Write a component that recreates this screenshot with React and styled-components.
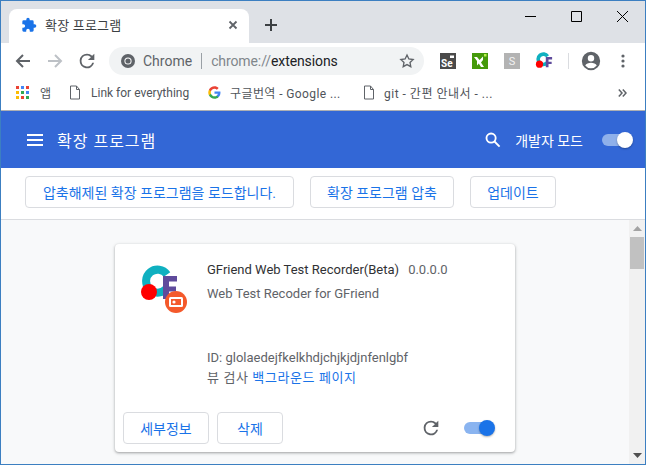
import React from 'react';
import styled, { createGlobalStyle } from 'styled-components';

const Global = createGlobalStyle`
  html, body { margin: 0; padding: 0; background: #fff; overflow: hidden; }
  * { box-sizing: border-box; }
`;

const Window = styled.div`
  width: 646px;
  height: 465px;
  border: 1px solid #3c7fc1;
  display: flex;
  flex-direction: column;
  overflow: hidden;
  font-family: Roboto, "Noto Sans CJK KR", sans-serif;
  background: #fff;
`;

const TabStrip = styled.div`
  height: 42px;
  flex: none;
  background: #dee1e6;
  display: flex;
  align-items: flex-end;
  padding-left: 8px;
`;

const Tab = styled.div`
  width: 240px;
  height: 34px;
  background: #fff;
  border-radius: 8px 8px 0 0;
  display: flex;
  align-items: center;
  padding: 0 11px 3px 12px;
  font-size: 13px;
  color: #3c4043;
  gap: 8px;
`;

const TabTitle = styled.span`
  flex: 1;
  letter-spacing: 0.2px;
`;

const NewTab = styled.div`
  width: 44px;
  height: 34px;
  display: flex;
  align-items: center;
  justify-content: center;
  padding-bottom: 3px;
`;

const WindowControls = styled.div`
  margin-left: auto;
  align-self: flex-start;
  display: flex;
  height: 30px;
  align-items: center;
`;

const WinBtn = styled.div`
  width: 46px;
  height: 30px;
  display: flex;
  align-items: center;
  justify-content: center;
`;

const Toolbar = styled.div`
  height: 34px;
  flex: none;
  display: flex;
  align-items: center;
  padding: 2px 0 0 6px;
  background: #fff;
`;

const NavBtn = styled.div`
  width: 32px;
  height: 28px;
  display: flex;
  align-items: center;
  justify-content: center;
`;

const Omnibox = styled.div`
  width: 315px;
  height: 28px;
  margin-left: 6px;
  background: #f1f3f4;
  border-radius: 14px;
  display: flex;
  align-items: center;
  padding: 0 9px 0 12px;
  font-size: 14px;
  color: #5f6368;
`;

const Scheme = styled.span`
  margin-left: 8px;
`;

const Divider = styled.span`
  width: 1px;
  height: 16px;
  background: #9aa0a6;
  margin: 0 9px;
`;

const Url = styled.span`
  flex: 1;
  color: #80868b;
  letter-spacing: -0.1px;
  b { font-weight: 400; color: #202124; }
`;

const ExtSlot = styled.div`
  width: 32px;
  height: 28px;
  display: flex;
  align-items: center;
  justify-content: center;
`;

const Extensions = styled.div`
  display: flex;
  align-items: center;
  margin-left: 8px;
`;

const ExtIcon = styled.div`
  width: 16px;
  height: 16px;
  background: ${p => p.$bg};
`;

const Sep = styled.div`
  width: 1px;
  height: 16px;
  background: #dadce0;
  margin: 0 6px 0 8px;
`;

const Bookmarks = styled.div`
  height: 29px;
  flex: none;
  display: flex;
  align-items: center;
  padding: 2px 0 0 15px;
  font-size: 12px;
  color: #50545a;
`;

const Bookmark = styled.div`
  display: flex;
  align-items: center;
  gap: ${p => p.$gap}px;
  width: ${p => p.$w}px;
  flex: none;
  white-space: nowrap;
  overflow: hidden;
  letter-spacing: ${p => p.$track || 0}px;
`;

const More = styled.div`
  margin-left: 92px;
  display: flex;
`;

const ChromeLine = styled.div`
  height: 5px;
  flex: none;
  border-bottom: 1px solid #aeb0b3;
  background: #fff;
`;

const Header = styled.header`
  height: 57px;
  flex: none;
  background: #3367d6;
  display: flex;
  align-items: center;
  padding: 0 13px 0 26px;
  color: #fff;
`;

const Title = styled.h1`
  margin: 0 0 0 14px;
  font-size: 16px;
  font-weight: 400;
  letter-spacing: 1px;
`;

const HeaderRight = styled.div`
  margin-left: auto;
  display: flex;
  align-items: center;
  font-size: 14px;
`;

const DevLabel = styled.span`
  margin: 0 19px 0 14px;
`;

const Track = styled.div`
  position: relative;
  width: 30px;
  height: 12px;
  border-radius: 6px;
  background: ${p => p.$bg};
`;

const Thumb = styled.div`
  position: absolute;
  right: -1px;
  top: -2px;
  width: 16px;
  height: 16px;
  border-radius: 50%;
  background: ${p => p.$bg};
  box-shadow: 0 1px 2px rgba(0, 0, 0, 0.3);
`;

const ActionBar = styled.div`
  height: 52px;
  flex: none;
  display: flex;
  align-items: flex-start;
  gap: 16px;
  padding: 8px 0 0 24px;
  background: #fff;
  border-bottom: 1px solid #dadce0;
`;

const Button = styled.button`
  height: 32px;
  width: ${p => p.$w}px;
  border: 1px solid #dadce0;
  border-radius: 4px;
  background: #fff;
  color: #1a73e8;
  font: 400 14px Roboto, "Noto Sans CJK KR", sans-serif;
  padding: 0;
`;

const Body = styled.div`
  flex: 1;
  display: flex;
  background: #f8f9fa;
  min-height: 0;
`;

const Content = styled.div`
  flex: 1;
  padding: 24px 0 0 114px;
  overflow: hidden;
`;

const Card = styled.article`
  width: 400px;
  height: 208px;
  background: #fff;
  border-radius: 4px;
  box-shadow: 0 1px 2px rgba(60, 64, 67, 0.3), 0 1px 3px 1px rgba(60, 64, 67, 0.15);
  display: flex;
  flex-direction: column;
`;

const CardMain = styled.div`
  flex: 1;
  display: flex;
  padding: 19px 20px 0 24px;
`;

const Logo = styled.svg`
  width: 52px;
  height: 52px;
  flex: none;
  margin-top: 2px;
`;

const Info = styled.div`
  margin-left: 16px;
  display: flex;
  flex-direction: column;
  font-size: 13px;
  color: #5f6368;
`;

const NameRow = styled.div`
  display: flex;
  gap: 9px;
  height: 14px;
  line-height: 14px;
  color: #303134;
  margin-bottom: 7px;
  span + span { color: #5f6368; }
`;

const InfoLine = styled.div`
  line-height: 20px;
  margin-top: ${p => p.$top || 0}px;
`;

const InspectLine = styled(InfoLine)`
  letter-spacing: 0.6px;
  a { color: #1a73e8; text-decoration: none; }
`;

const CardFoot = styled.div`
  display: flex;
  align-items: center;
  gap: 8px;
  padding: 0 21px 8px 8px;
`;

const FootRight = styled.div`
  margin-left: auto;
  display: flex;
  align-items: center;
  gap: 22px;
`;

const ScrollBar = styled.div`
  width: 16px;
  flex: none;
  background: #f1f1f1;
  display: flex;
  flex-direction: column;
  align-items: center;
`;

const ScrollThumb = styled.div`
  width: 14px;
  height: 32px;
  background: #c1c1c1;
`;

const ScrollRest = styled.div`
  flex: 1;
`;

const Arrow = styled.div`
  width: 16px;
  height: 17px;
  display: flex;
  align-items: center;
  justify-content: center;
`;

const PuzzlePath = "M20.5 11H19V7a2 2 0 0 0-2-2h-4V3.5a2.5 2.5 0 0 0-5 0V5H4a2 2 0 0 0-2 2v3.8h1.5a2.7 2.7 0 0 1 0 5.4H2V20a2 2 0 0 0 2 2h3.8v-1.5a2.7 2.7 0 0 1 5.4 0V22H17a2 2 0 0 0 2-2v-4h1.5a2.5 2.5 0 0 0 0-5z";

const Reload = () => (
  <svg width="22" height="22" viewBox="0 0 24 24" fill="#5f6368">
    <path d="M17.65 6.35A7.96 7.96 0 0 0 12 4a8 8 0 1 0 7.73 10h-2.08A6 6 0 1 1 12 6c1.66 0 3.14.69 4.22 1.78L13 11h7V4l-2.35 2.35z" />
  </svg>
);

const PageIcon = () => (
  <svg width="12" height="15" viewBox="0 0 12 15" fill="none" stroke="#5f6368">
    <path d="M1.500 1h6l3 3.500v9.500h-9zM7.500 1v3.500h3" />
  </svg>
);

const GoogleG = () => (
  <svg width="13" height="13" viewBox="0 0 48 48">
    <path fill="#4285f4" d="M46 24.5c0-1.600-.1-3.100-.4-4.500H24v8.500h12.400c-.5 2.800-2.100 5.200-4.500 6.800v5.600h7.300C43.500 37 46 31.300 46 24.500z" />
    <path fill="#34a853" d="M24 47c6.200 0 11.300-2 15.200-5.600l-7.300-5.600c-2 1.400-4.700 2.200-7.900 2.200-6 0-11.100-4-12.900-9.500H3.500v5.800C7.300 41.800 15 47 24 47z" />
    <path fill="#fbbc05" d="M11.100 28.500a13.800 13.800 0 0 1 0-9V13.700H3.500a23 23 0 0 0 0 20.600z" />
    <path fill="#ea4335" d="M24 10.100c3.400 0 6.400 1.200 8.800 3.400l6.500-6.500C35.300 3.300 30.200 1 24 1 15 1 7.300 6.200 3.500 13.700l7.600 5.800C12.900 14.100 18 10.100 24 10.100z" />
  </svg>
);

const AppsGrid = () => {
  const colors = ['#ea4335', '#4285f4', '#ea4335', '#fbbc05', '#34a853', '#4285f4', '#fbbc05', '#ea4335', '#34a853'];
  return (
    <svg width="13" height="13" viewBox="0 0 13 13">
      {colors.map((c, i) => (
        <rect key={i} x={(i % 3) * 5} y={Math.floor(i / 3) * 5} width="3" height="3" fill={c} />
      ))}
    </svg>
  );
};

const GfMark = () => (
  <>
    <path d="M28 9.500A11.500 11.500 0 1 0 27 24" fill="none" stroke="#0fb0c0" strokeWidth="8" />
    <path d="M24 11h14v5.500h-8v5h7v5h-7V34h-6z" fill="#5f4b9c" />
    <circle cx="10" cy="27" r="8" fill="#f00" />
  </>
);

export default function App() {
  return (
    <>
      <Global />
      <Window>
        <TabStrip>
          <Tab>
            <svg width="16" height="16" viewBox="0 0 24 24" fill="#1a73e8"><path d={PuzzlePath} /></svg>
            <TabTitle>확장 프로그램</TabTitle>
            <svg width="10" height="10" viewBox="0 0 10 10" stroke="#5f6368" strokeWidth="1.8"><path d="M1.500 1.500l7 7M8.500 1.500l-7 7" /></svg>
          </Tab>
          <NewTab>
            <svg width="12" height="12" viewBox="0 0 12 12" stroke="#3c4043" strokeWidth="2"><path d="M6 0v12M0 6h12" /></svg>
          </NewTab>
          <WindowControls>
            <WinBtn><svg width="11" height="11" viewBox="0 0 11 11" stroke="#000"><path d="M0 5.500h11" /></svg></WinBtn>
            <WinBtn><svg width="11" height="11" viewBox="0 0 11 11" fill="none" stroke="#000"><path d="M.5.500h10v10H.5z" /></svg></WinBtn>
            <WinBtn><svg width="11" height="11" viewBox="0 0 11 11" stroke="#000"><path d="M0 0l11 11M11 0L0 11" /></svg></WinBtn>
          </WindowControls>
        </TabStrip>

        <Toolbar>
          <NavBtn><svg width="16" height="16" viewBox="0 0 16 16" fill="none" stroke="#5f6368" strokeWidth="2"><path d="M15 8H2M8 2L2 8l6 6" /></svg></NavBtn>
          <NavBtn><svg width="16" height="16" viewBox="0 0 16 16" fill="none" stroke="#bdc1c6" strokeWidth="2"><path d="M1 8h13M8 2l6 6-6 6" /></svg></NavBtn>
          <NavBtn><Reload /></NavBtn>
          <Omnibox>
            <svg width="14" height="14" viewBox="0 0 14 14">
              <circle cx="7" cy="7" r="7" fill="#5f6368" />
              <circle cx="7" cy="7" r="3.600" fill="#fff" />
              <circle cx="7" cy="7" r="2.600" fill="#5f6368" />
            </svg>
            <Scheme>Chrome</Scheme>
            <Divider />
            <Url>chrome://<b>extensions</b></Url>
            <svg width="16" height="16" viewBox="0 0 24 24" fill="none" stroke="#5f6368" strokeWidth="2"><path d="M12 3l2.800 5.900 6.400.8-4.700 4.400 1.200 6.400L12 17.400l-5.700 3.100 1.200-6.400-4.700-4.400 6.400-.8z" /></svg>
          </Omnibox>
          <Extensions>
            <ExtSlot>
              <svg width="16" height="16" viewBox="0 0 16 16">
                <rect width="16" height="16" fill="#4a4a4a" />
                <rect x="10" y="2.500" width="4" height="2.500" fill="#fff" />
                <text x="1" y="14" fontSize="10" fontWeight="700" fontFamily="Roboto, sans-serif" fill="#fff">Se</text>
              </svg>
            </ExtSlot>
            <ExtSlot>
              <svg width="16" height="16" viewBox="0 0 16 16">
                <rect width="16" height="16" fill="#459a0a" />
                <path d="M2 4h3l2.500 3L11 3.500V7L9 9.500l3 4.500H9L6.800 10.500 5 12.500V8z" fill="#fff" />
                <rect x="12" y="1" width="2.500" height="2.500" fill="#b7f04a" />
              </svg>
            </ExtSlot>
            <ExtSlot>
              <ExtIcon $bg="#b3b3b3">
                <svg width="16" height="16" viewBox="0 0 16 16">
                  <text x="8" y="12" fontSize="11" textAnchor="middle" fontFamily="Roboto, sans-serif" fill="#f2f2f2">S</text>
                </svg>
              </ExtIcon>
            </ExtSlot>
            <ExtSlot>
              <svg width="18" height="18" viewBox="0 0 40 40"><GfMark /></svg>
            </ExtSlot>
            <Sep />
            <ExtSlot>
              <svg width="22" height="22" viewBox="0 0 24 24" fill="#5f6368">
                <path d="M12 2a10 10 0 1 0 0 20 10 10 0 0 0 0-20zm0 3.500a3.500 3.500 0 1 1 0 7 3.500 3.500 0 0 1 0-7zM12 20a8 8 0 0 1-6.300-3.100c.9-1.900 3.700-2.900 6.300-2.900s5.400 1 6.300 2.900A8 8 0 0 1 12 20z" />
              </svg>
            </ExtSlot>
            <ExtSlot>
              <svg width="4" height="14" viewBox="0 0 4 14" fill="#5f6368"><circle cx="2" cy="2" r="1.600" /><circle cx="2" cy="7" r="1.600" /><circle cx="2" cy="12" r="1.600" /></svg>
            </ExtSlot>
          </Extensions>
        </Toolbar>

        <Bookmarks>
          <Bookmark $w="53" $gap="11"><AppsGrid /><span>앱</span></Bookmark>
          <Bookmark $w="139" $gap="10"><PageIcon /><span>Link for everything</span></Bookmark>
          <Bookmark $w="155" $gap="9" $track="0.4"><GoogleG /><span>구글번역 - Google ...</span></Bookmark>
          <Bookmark $w="163" $gap="9" $track="0.5"><PageIcon /><span>git - 간편 안내서 - ...</span></Bookmark>
          <More>
            <svg width="9" height="8" viewBox="0 0 9 8" fill="none" stroke="#5f6368" strokeWidth="1.500"><path d="M.8.500L4 4 .8 7.500M4.800.500L8 4 4.800 7.500" /></svg>
          </More>
        </Bookmarks>
        <ChromeLine />

        <Header>
          <svg width="16" height="12" viewBox="0 0 16 12" fill="#fff"><path d="M0 0h16v2H0zM0 5h16v2H0zM0 10h16v2H0z" /></svg>
          <Title>확장 프로그램</Title>
          <HeaderRight>
            <svg width="17" height="17" viewBox="0 0 24 24" fill="none" stroke="#fff" strokeWidth="2.600"><circle cx="10" cy="10" r="6.500" /><path d="M14.800 14.800L22 22" /></svg>
            <DevLabel>개발자 모드</DevLabel>
            <Track $bg="#8fb0ea"><Thumb $bg="#fff" /></Track>
          </HeaderRight>
        </Header>

        <ActionBar>
          <Button $w="269">압축해제된 확장 프로그램을 로드합니다.</Button>
          <Button $w="144">확장 프로그램 압축</Button>
          <Button $w="86">업데이트</Button>
        </ActionBar>

        <Body>
          <Content>
            <Card>
              <CardMain>
                <Logo viewBox="0 0 52 52">
                  <GfMark />
                  <circle cx="37" cy="37" r="11" fill="#f4592b" />
                  <rect x="30" y="32" width="14" height="10" rx="1.500" fill="#fff" />
                  <rect x="32" y="34" width="10" height="6" fill="#f4592b" />
                  <circle cx="35" cy="37" r="1.600" fill="#fff" />
                </Logo>
                <Info>
                  <NameRow><span>GFriend Web Test Recorder(Beta)</span><span>0.0.0.0</span></NameRow>
                  <InfoLine>Web Test Recoder for GFriend</InfoLine>
                  <InfoLine $top={44}>ID: glolaedejfkelkhdjchjkjdjnfenlgbf</InfoLine>
                  <InspectLine>뷰 검사 <a href="#bg">백그라운드 페이지</a></InspectLine>
                </Info>
              </CardMain>
              <CardFoot>
                <Button $w="86">세부정보</Button>
                <Button $w="66">삭제</Button>
                <FootRight>
                  <Reload />
                  <Track $bg="#8ab4f0"><Thumb $bg="#1a73e8" /></Track>
                </FootRight>
              </CardFoot>
            </Card>
          </Content>
          <ScrollBar>
            <Arrow><svg width="9" height="5" viewBox="0 0 9 5" fill="#a3a3a3"><path d="M4.500 0L9 5H0z" /></svg></Arrow>
            <ScrollThumb />
            <ScrollRest />
            <Arrow><svg width="9" height="5" viewBox="0 0 9 5" fill="#505050"><path d="M0 0h9L4.500 5z" /></svg></Arrow>
          </ScrollBar>
        </Body>
      </Window>
    </>
  );
}
